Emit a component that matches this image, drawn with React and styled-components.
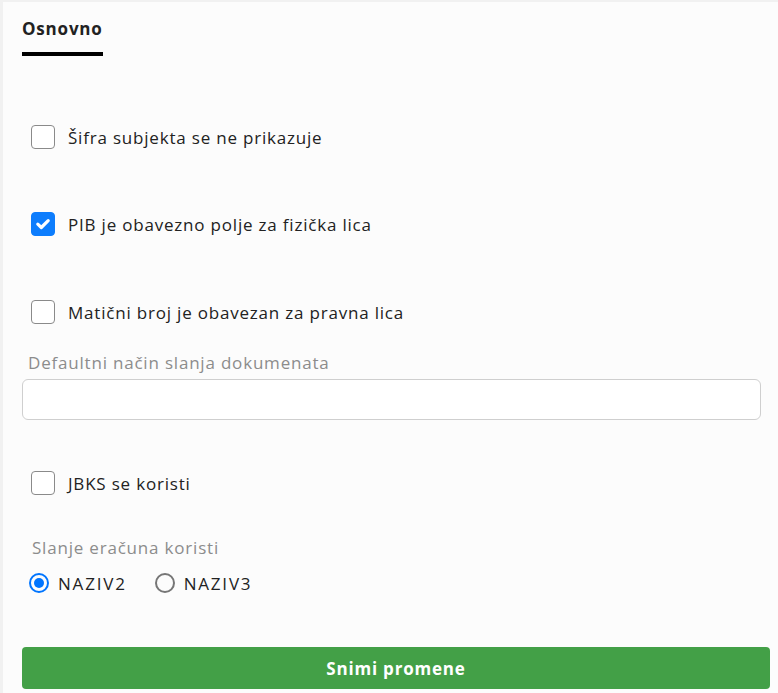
import React, { useState } from 'react'
import styled, { createGlobalStyle } from 'styled-components'

const GlobalStyle = createGlobalStyle`
  html, body {
    margin: 0;
    background: #f1f1f1;
  }
  body {
    font-family: "Open Sans", "Noto Sans", sans-serif;
    letter-spacing: 0.8px;
    color: #222;
  }
`;

const Panel = styled.div`
  display: flex;
  flex-direction: column;
  align-items: stretch;
  margin: 2px 0 0 3px;
  padding: 0 8px 4px 19px;
  min-height: 687px;
  box-sizing: border-box;
  background: #fcfcfc;
`;

const TabBar = styled.div`
  display: flex;
  padding-top: 15px;
`;

const Tab = styled.div`
  font-size: 17px;
  line-height: 24px;
  font-weight: 700;
  color: #222;
  padding-bottom: 11px;
  border-bottom: 4px solid #000;
`;

const CheckRow = styled.label`
  display: flex;
  align-items: center;
  gap: 13px;
  height: 24px;
  margin-top: ${p => p.$top}px;
  padding-left: 9px;
  font-size: 17px;
  cursor: pointer;
`;

const Box = styled.span`
  width: 24px;
  height: 24px;
  box-sizing: border-box;
  border-radius: 4px;
  border: 1px solid ${p => (p.$checked ? '#0d7dfd' : '#8a8a8a')};
  background: ${p => (p.$checked ? '#0d7dfd' : '#fff')};
  display: flex;
  align-items: center;
  justify-content: center;
  flex-shrink: 0;
`;

const FieldLabel = styled.div`
  font-size: 17px;
  line-height: 24px;
  color: #8c8c8c;
  margin-top: ${p => p.$top}px;
  padding-left: ${p => p.$left}px;
`;

const Input = styled.input`
  height: 41px;
  margin: 4px 9px 0 0;
  box-sizing: border-box;
  border: 1px solid #cfcfcf;
  border-radius: 6px;
  background: #fff;
  outline: none;
  font-size: 16px;
  padding: 0 10px;
`;

const RadioGroup = styled.div`
  display: flex;
  align-items: center;
  gap: 28px;
  height: 24px;
  margin-top: 11px;
  padding-left: 7px;
`;

const RadioItem = styled.label`
  display: flex;
  align-items: center;
  gap: 9px;
  font-size: 17px;
  letter-spacing: 1.8px;
  cursor: pointer;
`;

const Circle = styled.span`
  width: 20px;
  height: 20px;
  box-sizing: border-box;
  border-radius: 50%;
  border: 2px solid ${p => (p.$checked ? '#0075ff' : '#767676')};
  display: flex;
  align-items: center;
  justify-content: center;
  &::after {
    content: '';
    width: 10px;
    height: 10px;
    border-radius: 50%;
    background: ${p => (p.$checked ? '#0075ff' : 'transparent')};
  }
`;

const SaveButton = styled.button`
  margin-top: 52px;
  height: 42px;
  border: none;
  border-radius: 4px;
  background: #43a047;
  color: #fff;
  font-family: "Open Sans", sans-serif;
  font-size: 17px;
  font-weight: 700;
  letter-spacing: 0.8px;
  cursor: pointer;
`;

function Check({ checked, top, children, onToggle }) {
  return (
    <CheckRow $top={top} onClick={onToggle}>
      <Box $checked={checked}>
        {checked && (
          <svg width="16" height="16" viewBox="0 0 16 16">
            <path d="M2.8 8.2 L6.3 11.5 L13.2 4.6" fill="none" stroke="#fff" strokeWidth="3.2" strokeLinecap="round" strokeLinejoin="round" />
          </svg>
        )}
      </Box>
      {children}
    </CheckRow>
  );
}

export default function App() {
  const [checks, setChecks] = useState({ sifra: false, pib: true, mb: false, jbks: false });
  const [send, setSend] = useState('NAZIV2');
  const toggle = key => () => setChecks(c => ({ ...c, [key]: !c[key] }));

  return (
    <>
      <GlobalStyle />
      <Panel>
        <TabBar>
          <Tab>Osnovno</Tab>
        </TabBar>
        <Check top={69} checked={checks.sifra} onToggle={toggle('sifra')}>Šifra subjekta se ne prikazuje</Check>
        <Check top={63} checked={checks.pib} onToggle={toggle('pib')}>PIB je obavezno polje za fizička lica</Check>
        <Check top={64} checked={checks.mb} onToggle={toggle('mb')}>Matični broj je obavezan za pravna lica</Check>
        <FieldLabel $top={27} $left={6}>Defaultni način slanja dokumenata</FieldLabel>
        <Input />
        <Check top={51} checked={checks.jbks} onToggle={toggle('jbks')}>JBKS se koristi</Check>
        <FieldLabel $top={41} $left={10}>Slanje eračuna koristi</FieldLabel>
        <RadioGroup>
          {['NAZIV2', 'NAZIV3'].map(n => (
            <RadioItem key={n} onClick={() => setSend(n)}>
              <Circle $checked={send === n} />
              {n}
            </RadioItem>
          ))}
        </RadioGroup>
        <SaveButton>Snimi promene</SaveButton>
      </Panel>
    </>
  );
}
